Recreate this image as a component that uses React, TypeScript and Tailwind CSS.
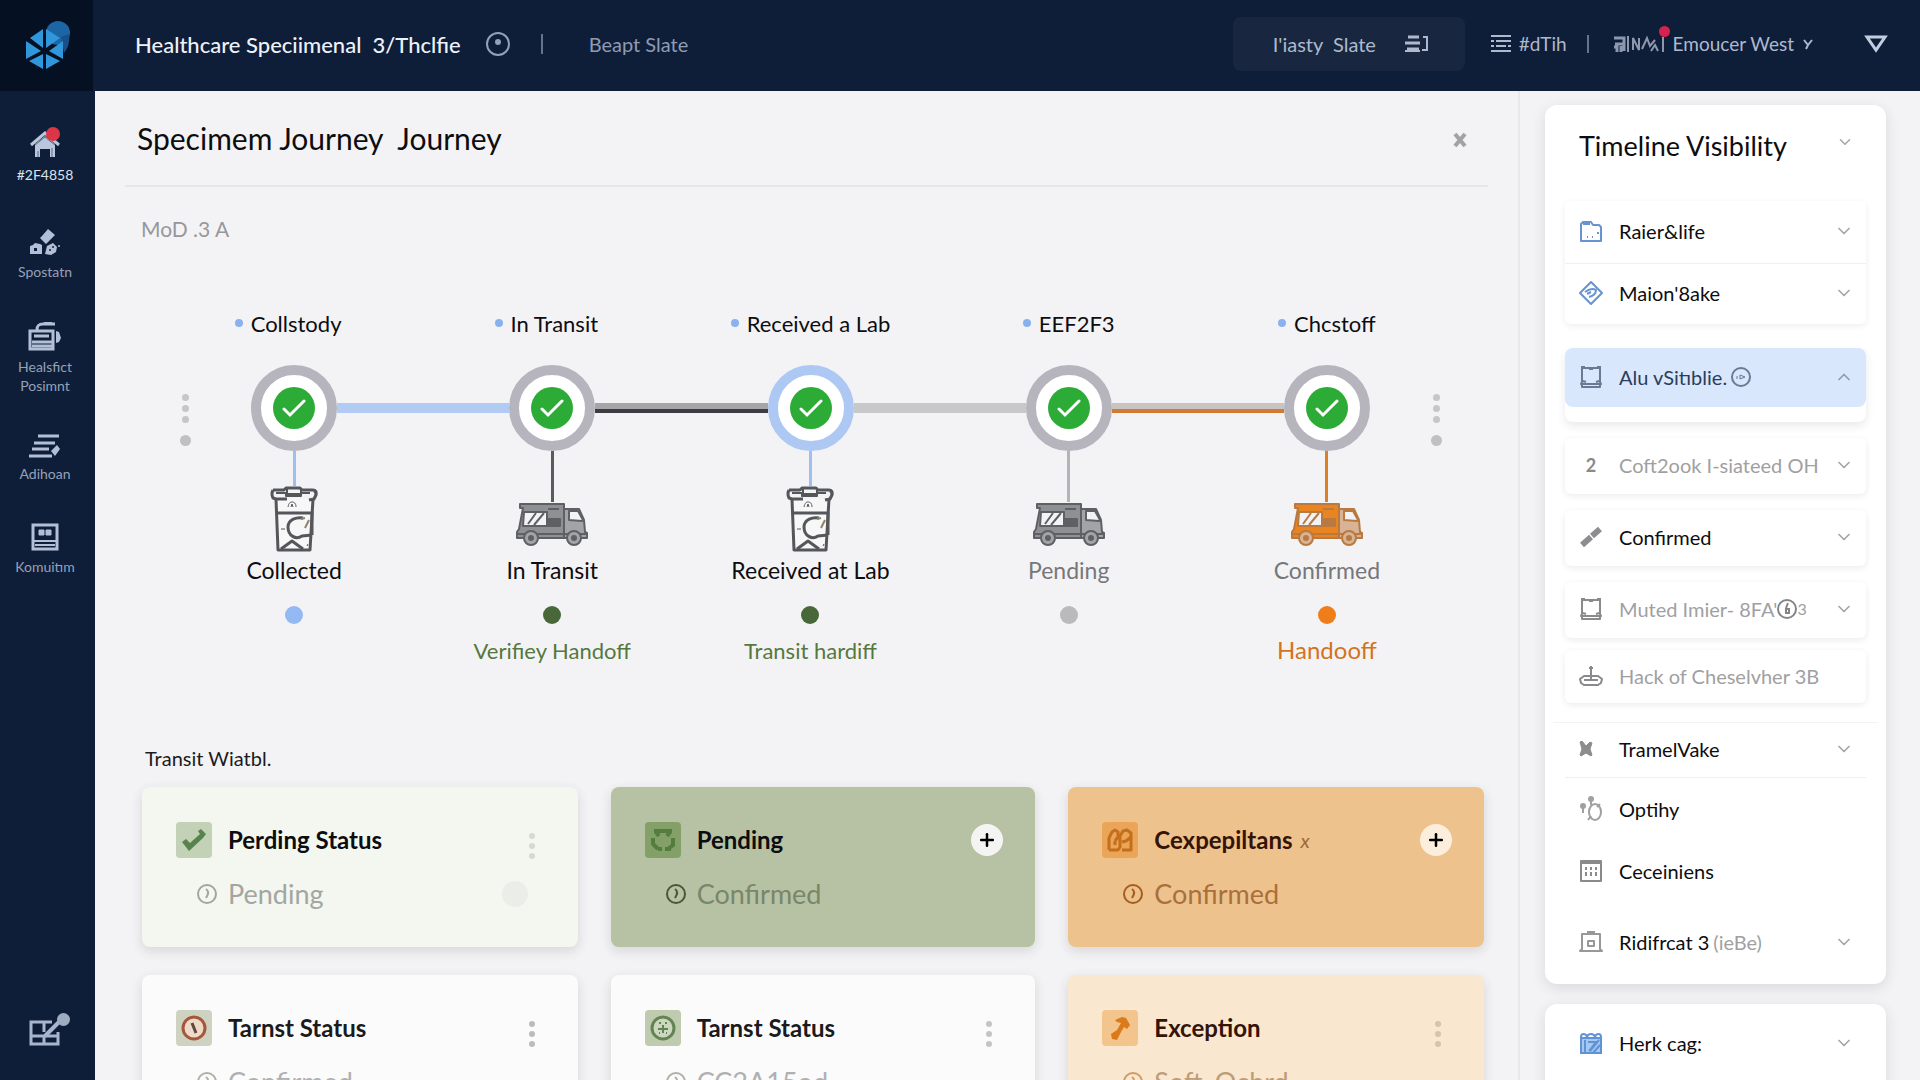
import { ReactNode } from 'react';
import { ChevronDown, ChevronUp, Plus } from 'lucide-react';

interface Step {
  title: string;
  titleClass?: string;
  label: string;
  labelClass: string;
  ring: string;
  left: ReactNode;
  right: ReactNode;
  stem: string;
  icon: ReactNode;
  iconClass: string;
  dot: string;
  note?: string;
  noteClass?: string;
}

interface StatusCard {
  title: string;
  titleClass: string;
  suffix?: string;
  sub: string;
  subClass: string;
  clockClass: string;
  bg: string;
  tile: string;
  icon: ReactNode;
  action: 'menu' | 'plus';
  actionClass: string;
  ghost?: boolean;
}

/* Sidebar icons */

function HouseIcon() {
  return (
    <svg width="30" height="28" viewBox="0 0 30 28" fill="none">
      <path d="M5 13v13h5v-8h10v8h5V13l-10-8z" fill="#b9c6dc" />
      <path d="M1 14 15 2l14 12" stroke="#b9c6dc" strokeWidth="3" />
      <path d="M5 14 15 6l10 8" stroke="#5c6b86" strokeWidth="1" />
      <path d="M22 5v5" stroke="#b9c6dc" strokeWidth="3" />
      <path d="M8 20v6M22 17v9" stroke="#5c6b86" strokeWidth="1" />
      <path d="M12 18h6v9h-6z" fill="#0f1e38" />
    </svg>
  );
}

function SpecimenIcon() {
  return (
    <svg width="32" height="28" viewBox="0 0 32 28" fill="#b3bfd6">
      <path d="m19 1 7 6-9 9-6-6 2-2z" />
      <path d="M1 18l3-1 2-2 5 1 2 1v9H1z" />
      <path d="M16 26l2-8 6-3 4 4-1 5-5 3z" />
      <path d="M5 20h3v3H5z" fill="#0f1e38" />
      <circle cx="21" cy="22" r="1" fill="#0f1e38" />
      <circle cx="24" cy="19" r="1" fill="#0f1e38" />
      <circle cx="30" cy="18" r="1" />
    </svg>
  );
}

function PrinterIcon() {
  return (
    <svg width="34" height="30" viewBox="0 0 34 30" fill="none" stroke="#b3bfd6">
      <path d="M9 9c0-5 2-6 6-6h12" strokeWidth="3" />
      <path d="M16 2h8" strokeWidth="2" />
      <path d="M2 10h23v18H2z" strokeWidth="3" />
      <path d="M6 15h15M4 21h20M4 25h20" strokeWidth="3" />
      <path d="M28 10l3 1 2 6-2 4-3 1z" fill="#b3bfd6" stroke="none" />
    </svg>
  );
}

function ListPenIcon() {
  return (
    <svg width="34" height="24" viewBox="0 0 34 24" fill="none" stroke="#b3bfd6" strokeWidth="3">
      <path d="M10 2h21M6 9h21M4 15h17M1 22h23" />
      <path d="m23 17 6-6 3 4-5 7z" fill="#b3bfd6" stroke="none" />
    </svg>
  );
}

function PanelIcon() {
  return (
    <svg width="28" height="28" viewBox="0 0 28 28" fill="none" stroke="#b3bfd6">
      <rect x="2" y="2" width="24" height="24" strokeWidth="3" />
      <path d="M3 18h22M4 22h20" strokeWidth="2" />
      <path d="M8 7h5v5H8zM15 7h5v5h-5z" fill="#b3bfd6" strokeWidth="1" />
    </svg>
  );
}

/* Timeline icons */

function CupIcon() {
  return (
    <svg width="48" height="66" viewBox="0 0 48 66" fill="none" stroke="#55565a" strokeWidth="3" strokeLinejoin="round">
      <path d="M6 13 8 64h32l3-51" fill="#f7f7f8" />
      <path d="M3 4h11l2-2h14l2 2h11q4 0 3 5l-2 4-5 1M3 4Q1 8 3 12l3 1h11" />
      <path d="M17 3v5h14V3M6 7h10v3h15V7h9" strokeWidth="2" />
      <path d="M44 5c2 2 2 5 0 7" strokeWidth="2" />
      <path d="M18 21c1-4 2-5 4-5s4 1 4 5M21 21l1-3 1 3" strokeWidth="1" />
      <path d="M7 27h35v22" />
      <path d="M33 32c-6-1-15 1-15 9 0 9 8 13 14 9l10-1" />
      <path d="m35 42 4-8M31 33l4-1" stroke="#8d8466" strokeWidth="2" />
      <path d="M11 43h4M37 60l1-2" strokeWidth="1" />
      <path d="m11 63 11-8 11 8" />
    </svg>
  );
}

function TruckIcon({ body, cab, line }: { body: string; cab: string; line: string }) {
  return (
    <svg width="72" height="44" viewBox="0 0 72 44" fill="none" stroke={line} strokeWidth="2" strokeLinejoin="round">
      <path d="M4 2h44v34H1v-6l2-3L7 6H4z" fill={body} />
      <path d="M48 7h15l5 11 1 12 2 1v5H48z" fill={cab} />
      <path d="M53 9h9l5 9-1 1-13-1z" fill="#f3f3f5" />
      <path d="M8 10h23v14H7z" fill="#f3f3f5" />
      <path d="m12 22 8-11M18 23l10-12" />
      <path d="M32 7h11M32 17h12v7H32zM32 20h12" fill={line} />
      <path d="M2 32h69M2 36h68" strokeWidth="2" />
      <circle cx="15" cy="36" r="7" fill={cab} />
      <circle cx="15" cy="36" r="2" fill={line} />
      <circle cx="58" cy="36" r="7" fill={cab} />
      <circle cx="58" cy="36" r="2" fill={line} />
    </svg>
  );
}

function ClockIcon({ className }: { className: string }) {
  return (
    <svg width="22" height="22" viewBox="0 0 22 22" fill="none" stroke="currentColor" className={className}>
      <circle cx="11" cy="11" r="9" strokeWidth="2" />
      <path d="M10 6c3 2 2 6 0 9" strokeWidth="2" />
    </svg>
  );
}

function SideDots() {
  return (
    <div className="flex w-10 flex-col items-center pt-6">
      <div className="flex flex-col gap-1">
        <span className="size-[7px] rounded-full bg-[#c6c6c8]" />
        <span className="size-[7px] rounded-full bg-[#c6c6c8]" />
        <span className="size-[7px] rounded-full bg-[#c6c6c8]" />
      </div>
      <span className="mt-3 size-[11px] rounded-full bg-[#c0c0c2]" />
    </div>
  );
}

const blueLine = <div className="h-[10px] flex-1 bg-[#b1cbf5]" />;
const grayLine = <div className="h-[10px] flex-1 bg-[#c8c8ca]" />;
const darkLine = <div className="h-[10px] flex-1 border-b-4 border-[#3c3d42] bg-[#a6a6a8]" />;
const orangeLine = <div className="h-[10px] flex-1 border-b-4 border-[#d27a34] bg-[#c8c4c2]" />;

const steps: Step[] = [
  {
    title: 'Collstody',
    titleClass: 'mr-3',
    label: 'Collected',
    labelClass: 'text-[#0d0d0f]',
    ring: 'border-[#b6b5bd]',
    left: (
      <div className="flex-1">
        <SideDots />
      </div>
    ),
    right: blueLine,
    stem: 'bg-[#9fbff2]',
    icon: <CupIcon />,
    iconClass: 'h-[101px]',
    dot: 'bg-[#93b9f5]',
  },
  {
    title: 'In Transit',
    titleClass: 'mr-3',
    label: 'In Transit',
    labelClass: 'text-[#0d0d0f]',
    ring: 'border-[#b6b5bd]',
    left: blueLine,
    right: darkLine,
    stem: 'bg-[#5a5b60]',
    icon: <TruckIcon body="#8f9094" cab="#a3a4a8" line="#5f6065" />,
    iconClass: 'h-[101px] pb-[6px]',
    dot: 'bg-[#48683a]',
    note: 'Verifiey Handoff',
    noteClass: 'text-[22px] text-[#56783f]',
  },
  {
    title: 'Received a Lab',
    label: 'Received at Lab',
    labelClass: 'text-[#0d0d0f]',
    ring: 'border-[#adc8f3]',
    left: darkLine,
    right: grayLine,
    stem: 'bg-[#9fbff2]',
    icon: <CupIcon />,
    iconClass: 'h-[101px]',
    dot: 'bg-[#48683a]',
    note: 'Transit hardiff',
    noteClass: 'text-[22px] text-[#56783f]',
  },
  {
    title: 'EEF2F3',
    label: 'Pending',
    labelClass: 'text-[#77777a]',
    ring: 'border-[#b6b5bd]',
    left: grayLine,
    right: orangeLine,
    stem: 'bg-[#b4b4b8]',
    icon: <TruckIcon body="#8f9094" cab="#a3a4a8" line="#5f6065" />,
    iconClass: 'h-[101px] pb-[6px]',
    dot: 'bg-[#bababd]',
  },
  {
    title: 'Chcstoff',
    label: 'Confirmed',
    labelClass: 'text-[#77777a]',
    ring: 'border-[#b6b5bd]',
    left: orangeLine,
    right: (
      <div className="flex flex-1 justify-end">
        <SideDots />
      </div>
    ),
    stem: 'bg-[#dd7f22]',
    icon: <TruckIcon body="#ea8420" cab="#d8b396" line="#b9793f" />,
    iconClass: 'h-[101px] pb-[6px]',
    dot: 'bg-[#ef7d1a]',
    note: 'Handooff',
    noteClass: 'text-2xl text-[#d4731f]',
  },
];

const cards: StatusCard[] = [
  {
    title: 'Perding Status',
    titleClass: 'text-[#0d0d0f]',
    sub: 'Pending',
    subClass: 'text-[#a3a6a0]',
    clockClass: 'text-[#a3a6a0]',
    bg: 'bg-[#f4f6f0]',
    tile: 'bg-[#c3d1b6]',
    icon: (
      <svg width="26" height="24" viewBox="0 0 26 24" fill="#57834d">
        <path d="m1 14 4-3 4 4 10-9-2-3 3-2 5 5-3 4-14 13z" />
      </svg>
    ),
    action: 'menu',
    actionClass: 'bg-[#d6d8d4]',
    ghost: true,
  },
  {
    title: 'Pending',
    titleClass: 'text-[#0d0d0f]',
    sub: 'Confirmed',
    subClass: 'text-[#7a8669]',
    clockClass: 'text-[#4a5638]',
    bg: 'bg-[#b6c2a3]',
    tile: 'bg-[#84a069]',
    icon: (
      <svg width="26" height="24" viewBox="0 0 26 24" fill="none" stroke="#557c40" strokeWidth="4">
        <path d="M4 3h18M6 4l3 4M20 4l-3 4M3 10v6l5 5M23 10v7l-5 4M8 21h4M15 21h6" />
      </svg>
    ),
    action: 'plus',
    actionClass: 'bg-[#f4f5f2]',
  },
  {
    title: 'Cexpepiltans',
    titleClass: 'text-[#351307]',
    suffix: 'x',
    sub: 'Confirmed',
    subClass: 'text-[#a96f3c]',
    clockClass: 'text-[#a45d1f]',
    bg: 'bg-[#eec28c]',
    tile: 'bg-[#eba558]',
    icon: (
      <svg width="26" height="24" viewBox="0 0 26 24" fill="none" stroke="#c46f1b" strokeWidth="3" strokeLinejoin="round">
        <path d="M2 22V10l3-6 3-2 3 2v5l-3 4M2 22h9l2-3V8l3-5 4-1 4 3v4l-5 4-4 1M24 8v14h-9M8 13v4" />
      </svg>
    ),
    action: 'plus',
    actionClass: 'bg-[#fbeedd]',
  },
  {
    title: 'Tarnst Status',
    titleClass: 'text-[#1b1b1d]',
    sub: 'Confirmed',
    subClass: 'text-[#b0b0b0]',
    clockClass: 'text-[#b0b0a8]',
    bg: 'bg-[#fbfbfb]',
    tile: 'bg-[#ced2c0]',
    icon: (
      <svg width="26" height="26" viewBox="0 0 26 26" fill="#efd9c8" stroke="#a5573b" strokeWidth="3">
        <circle cx="13" cy="13" r="11" />
        <path d="m11 8 4 10" stroke="#5d4a3c" />
      </svg>
    ),
    action: 'menu',
    actionClass: 'bg-[#bcbcbe]',
  },
  {
    title: 'Tarnst Status',
    titleClass: 'text-[#1b1b1d]',
    sub: 'CC2A15od',
    subClass: 'text-[#b0b0b0]',
    clockClass: 'text-[#b0b0a8]',
    bg: 'bg-[#fbfbfb]',
    tile: 'bg-[#becbae]',
    icon: (
      <svg width="26" height="26" viewBox="0 0 26 26" fill="none" stroke="#648355" strokeWidth="3">
        <circle cx="13" cy="13" r="11" fill="#cbd8bf" />
        <path d="M13 10v8M8 14h10M9 8h2M15 8h2M9 18h1M16 18h1" strokeWidth="2" />
      </svg>
    ),
    action: 'menu',
    actionClass: 'bg-[#c4c4c6]',
  },
  {
    title: 'Exception',
    titleClass: 'text-[#351307]',
    sub: 'Soft_Ochrd',
    subClass: 'text-[#bd9c78]',
    clockClass: 'text-[#cf9c66]',
    bg: 'bg-[#f9e7cf]',
    tile: 'bg-[#f3c48b]',
    icon: (
      <svg width="26" height="26" viewBox="0 0 26 26" fill="#da7a1a">
        <path d="m8 5 7-3 4 1 4 7-3 4-3-2-3 5-4 8-5-1-1-5 6-4 4-7-4-1z" />
      </svg>
    ),
    action: 'menu',
    actionClass: 'bg-[#d8c3ab]',
  },
];

/* Panel icons, 24px box */

const trayPath = 'M3 3h18v14l1 2H2l1-2zM2 2h4M10 4h4M18 2h4M3 19v3h18v-3M4 16l3 1M17 17l3-1';

function PanelGlyph({ d, color }: { d: string; color: string }) {
  return (
    <svg
      width="24"
      height="24"
      viewBox="0 0 24 24"
      fill="none"
      stroke={color}
      strokeWidth="2"
      strokeLinejoin="round"
      className="shrink-0"
    >
      <path d={d} />
    </svg>
  );
}

function PanelRow({
  icon,
  children,
  className,
  chevron = 'down',
}: {
  icon: ReactNode;
  children: ReactNode;
  className: string;
  chevron?: 'down' | 'up' | 'none';
}) {
  return (
    <button
      type="button"
      className={`flex w-full items-center pr-3 pb-[2px] pl-[14px] text-left text-[20px] leading-6 ${className}`}
    >
      <span className="flex w-10 shrink-0 items-center">{icon}</span>
      <span className="flex flex-1 items-center gap-1 whitespace-nowrap">{children}</span>
      {chevron === 'down' && <ChevronDown size={20} className="shrink-0 text-[#a5a5a7]" />}
      {chevron === 'up' && <ChevronUp size={20} className="shrink-0 text-[#8e9bb0]" />}
    </button>
  );
}

function NavItem({ icon, label, className }: { icon: ReactNode; label: string; className: string }) {
  return (
    <a href="#" className={`flex flex-col items-center pb-[2px] text-center text-sm leading-[19px] ${className}`}>
      <span className="flex h-8 items-end">{icon}</span>
      <span className="mt-[6px] w-16">{label}</span>
    </a>
  );
}

function MenuDots({ dotClass }: { dotClass: string }) {
  return (
    <button type="button" aria-label="Card menu" className="ml-auto flex w-7 flex-col items-center gap-1 pt-3">
      <span className={`size-[6px] rounded-full ${dotClass}`} />
      <span className={`size-[6px] rounded-full ${dotClass}`} />
      <span className={`size-[6px] rounded-full ${dotClass}`} />
    </button>
  );
}

function Card({ card }: { card: StatusCard }) {
  return (
    <div className={`h-40 rounded-lg pt-[35px] pr-8 pl-[34px] shadow-[0_4px_12px_rgba(40,40,60,0.14)] ${card.bg}`}>
      <div className="flex h-9 items-center">
        <span className={`flex size-9 items-center justify-center rounded-[4px] ${card.tile}`}>{card.icon}</span>
        <h3 className={`ml-4 text-2xl leading-7 font-bold ${card.titleClass}`}>{card.title}</h3>
        {card.suffix && <span className="ml-2 text-xl text-[#a06a35] italic">{card.suffix}</span>}
        {card.action === 'menu' ? (
          <MenuDots dotClass={card.actionClass} />
        ) : (
          <button
            type="button"
            aria-label="Add"
            className={`ml-auto flex size-8 items-center justify-center rounded-full ${card.actionClass}`}
          >
            <Plus size={20} strokeWidth={3} className="text-black" />
          </button>
        )}
      </div>
      <div className="mt-[18px] flex h-9 items-center pl-5">
        <ClockIcon className={card.clockClass} />
        <span className={`ml-[10px] text-[27px] leading-8 ${card.subClass}`}>{card.sub}</span>
        {card.ghost && <span className="mr-[18px] ml-auto size-[26px] rounded-full bg-[#ebeee8]" />}
      </div>
    </div>
  );
}

function TimelineStep({ step }: { step: Step }) {
  return (
    <div className="flex flex-col items-center">
      <div className={`flex h-7 items-center gap-2 text-[22px] text-[#0d0d0f] ${step.titleClass ?? ''}`}>
        <span className="size-2 rounded-full bg-[#8ab1ee]" />
        {step.title}
      </div>
      <div className="mt-7 flex w-full items-center">
        {step.left}
        <div className={`flex size-[86px] items-center justify-center rounded-full border-[10px] bg-white ${step.ring}`}>
          <span className="flex size-[42px] items-center justify-center rounded-full bg-[#2cab36]">
            <svg width="24" height="20" viewBox="0 0 24 20" fill="none" stroke="#fff" strokeWidth="3" strokeLinecap="round">
              <path d="m2 11 6 6L22 3" />
            </svg>
          </span>
        </div>
        {step.right}
      </div>
      <div className={`flex flex-col items-center ${step.iconClass}`}>
        <span className={`w-[3px] flex-1 ${step.stem}`} />
        {step.icon}
      </div>
      <div className={`flex h-9 items-center text-[23px] ${step.labelClass}`}>{step.label}</div>
      <span className={`mt-[18px] size-[18px] rounded-full ${step.dot}`} />
      <div className={`mt-3 flex h-7 items-center ${step.noteClass ?? ''}`}>{step.note}</div>
    </div>
  );
}

export default function App() {
  return (
    <div className="flex h-screen flex-col overflow-hidden bg-[#f3f3f5] font-[Lato,'Noto_Sans',sans-serif]">
      {/* Top bar */}
      <header className="flex h-[91px] shrink-0 bg-[#0f1e38] text-[#aeb9ce]">
        <div className="flex w-[93px] items-center justify-center bg-[#051122]">
          <svg width="50" height="52" viewBox="0 0 50 52" fill="none">
            <circle cx="36" cy="13" r="12" fill="#1d66a6" />
            <path d="M47 14c1 8-1 14-5 19l-3-16z" fill="#17508a" />
            <path
              d="M21 9 8 18l13 10zM24 9l14 9-14 10zM4 21l15 10L4 39zM41 21v18L27 31zM21 34v15L7 41zM24 34v15l14-8z"
              fill="#3197dc"
            />
          </svg>
        </div>
        <div className="flex flex-1 items-center pb-[3px]">
          <h1 className="ml-[42px] text-[22px] font-medium whitespace-pre text-[#eef2f8]">Healthcare Speciimenal  3/Thclfie</h1>
          <svg width="26" height="26" viewBox="0 0 26 26" fill="none" stroke="#94a0b8" strokeWidth="2" className="ml-6">
            <circle cx="13" cy="13" r="11" />
            <circle cx="13" cy="11" r="2" fill="#94a0b8" />
          </svg>
          <span className="ml-[30px] h-5 w-[2px] bg-[#66738d]" />
          <a href="#" className="ml-[46px] text-xl text-[#8f9bb3]">
            Beapt Slate
          </a>

          <button
            type="button"
            className="ml-auto flex h-[54px] w-[232px] items-center justify-between rounded-lg bg-[#18273f] pr-9 pl-10 text-xl whitespace-pre"
          >
            I'iasty  Slate
            <svg width="24" height="18" viewBox="0 0 24 18" fill="none" stroke="#aeb9ce" strokeWidth="3">
              <path d="M3 2h11M0 8h15M2 14h12" />
              <path d="M0 16h15" strokeWidth="2" />
              <path d="M18 2h4v13h-5" strokeWidth="2" />
            </svg>
          </button>
          <svg width="20" height="18" viewBox="0 0 20 18" fill="none" stroke="#aeb9ce" strokeWidth="2" className="ml-[26px]">
            <path d="M0 1h20M0 16h20" />
            <path d="M0 6h3M5 6h15M0 11h3M5 11h10M17 11h3" />
          </svg>
          <span className="ml-2 text-[19px]">#dTih</span>
          <span className="ml-5 h-[18px] w-[2px] bg-[#66738d]" />
          <span className="relative ml-6">
            <svg width="52" height="20" viewBox="0 0 52 20" fill="none" stroke="#8c98b0" strokeWidth="2">
              <path d="M1 4h10v6H2M1 13h3v5M8 12v6M11 9v8" strokeWidth="3" />
              <path d="M15 2v16M20 16V4l6 12V4M29 15l5-11 3 8 5-6M38 17l4-6 3 6M50 3v15" />
            </svg>
            <span className="absolute -top-2 right-[-5px] size-[11px] rounded-full bg-[#d42350]" />
          </span>
          <button type="button" className="ml-2 flex items-center gap-2 text-[19px]">
            Emoucer West
            <svg width="12" height="12" viewBox="0 0 12 12" fill="none" stroke="#aeb9ce" strokeWidth="2">
              <path d="m2 2 4 5 4-5M6 7l-2 4" />
            </svg>
          </button>
          <button type="button" aria-label="Filter" className="mr-8 ml-[50px]">
            <svg width="24" height="18" viewBox="0 0 24 18" fill="none" stroke="#c3cde0" strokeWidth="3">
              <path d="M3 2h18l-9 13z" />
            </svg>
          </button>
        </div>
      </header>

      <div className="flex min-h-0 flex-1">
        {/* Sidebar */}
        <nav className="flex w-[95px] shrink-0 flex-col bg-[#0f1e38] pt-9 pr-[5px] text-[#95a1b8]">
          <NavItem
            className="text-[#dbe2ee]"
            label="#2F4858"
            icon={
              <span className="relative">
                <HouseIcon />
                <span className="absolute -top-1 right-0 size-[14px] rounded-full bg-[#dc3545]" />
              </span>
            }
          />
          <NavItem className="mt-[38px]" label="Spostatn" icon={<SpecimenIcon />} />
          <NavItem className="mt-9" label="Healsfict Posimnt" icon={<PrinterIcon />} />
          <NavItem className="mt-[29px]" label="Adihoan" icon={<ListPenIcon />} />
          <NavItem className="mt-[34px]" label="Komuitım" icon={<PanelIcon />} />
          <a href="#" aria-label="Workspace" className="relative mb-[33px] mt-auto self-center">
            <svg width="34" height="30" viewBox="0 0 34 30" fill="none" stroke="#a9b5cc" strokeWidth="3">
              <path d="M24 5H3v22h27V15M3 19h27M16 5v10M16 19v8" />
              <path d="M31 5 17 19" strokeWidth="4" />
            </svg>
            <span className="absolute -top-1 -right-2 size-[13px] rounded-full bg-[#9fabc0]" />
          </a>
        </nav>

        {/* Main */}
        <main className="min-w-0 flex-1 border-r-2 border-[#e8e8ea]">
          <div className="mx-[30px] flex h-24 items-center justify-between border-b-2 border-[#e6e6e8] pr-5 pl-3">
            <h2 className="text-3xl whitespace-pre text-[#0d0d0f]">Specimem Journey  Journey</h2>
            <button type="button" aria-label="Close" className="pt-1">
              <svg width="16" height="16" viewBox="0 0 16 16" stroke="#a2a2a4" strokeWidth="4">
                <path d="m3 2 10 12M13 2 3 14" />
              </svg>
            </button>
          </div>
          <div className="mt-7 ml-[46px] h-7 text-[21px] leading-7 text-[#97979a]">MoD .3 A</div>

          <div className="mt-[66px] mr-[62px] ml-[70px] grid grid-cols-5">
            {steps.map((step) => (
              <TimelineStep key={step.title} step={step} />
            ))}
          </div>

          <h3 className="mt-20 ml-[50px] h-7 text-xl leading-7 text-[#1b1b1d]">Transit Wiatbl.</h3>
          <div className="mt-[15px] mr-[34px] ml-[47px] grid grid-cols-[435fr_424fr_415fr] gap-x-[33px] gap-y-7">
            {cards.map((card, i) => (
              <Card key={i} card={card} />
            ))}
          </div>
        </main>

        {/* Timeline visibility */}
        <aside className="w-[400px] shrink-0 pt-[14px] pr-[34px] pl-[25px]">
          <section className="rounded-xl bg-white px-5 text-[#0d0d0f] shadow-[0_4px_14px_rgba(40,40,60,0.12)]">
            <div className="flex h-[82px] items-center justify-between pr-3 pl-[14px]">
              <h2 className="text-[27px]">Timeline Visibility</h2>
              <ChevronDown size={18} className="mb-2 text-[#a5a5a7]" />
            </div>

            <div className="mt-[14px] rounded-md shadow-[0_2px_6px_rgba(40,40,60,0.08)]">
              <PanelRow
                className="h-[62px]"
                icon={<PanelGlyph color="#6893d0" d="M4 3h8l2 3h6l2 2v14H2V5zM8 18h1M13 18h1M4 5h7M18 14h2" />}
              >
                Raier&life
              </PanelRow>
              <PanelRow
                className="h-[61px] border-t border-[#f0f0f1]"
                icon={<PanelGlyph color="#6893d0" d="M12 1 23 12 12 23 1 12zM6 11c4-3 8-4 11-2 0 4-3 6-7 7M12 11l-4 2" />}
              >
                Maion'8ake
              </PanelRow>
            </div>

            <div className="mt-6 rounded-lg pb-[15px] shadow-[0_4px_8px_rgba(40,40,60,0.1)]">
              <PanelRow
                className="h-[59px] rounded-lg bg-[#d8e7fc] text-[#2c3d5c]"
                chevron="up"
                icon={<PanelGlyph color="#6b7a93" d={trayPath} />}
              >
                Alu vSitıblie.
                <svg width="20" height="20" viewBox="0 0 20 20" fill="none" stroke="#6b7a93" strokeWidth="2">
                  <circle cx="10" cy="10" r="9" />
                  <path d="M6 9v3M9 8v4l5-2z" strokeWidth="1" />
                </svg>
              </PanelRow>
            </div>

            <div className="mt-4 flex flex-col gap-4">
              <PanelRow
                className="h-14 rounded-md text-[#a0a0a2] shadow-[0_2px_6px_rgba(40,40,60,0.09)]"
                icon={<span className="w-6 text-center text-lg font-bold text-[#8a8a8c]">2</span>}
              >
                Coft2ook I-siateed OH
              </PanelRow>
              <PanelRow
                className="h-14 rounded-md shadow-[0_2px_6px_rgba(40,40,60,0.09)]"
                icon={
                  <svg width="24" height="24" viewBox="0 0 24 24" fill="none" stroke="#8d8d8f" strokeWidth="6">
                    <path d="m3 20 9-8M13 11l8-7" />
                  </svg>
                }
              >
                Confirmed
              </PanelRow>
              <PanelRow
                className="h-14 rounded-md text-[#a0a0a2] shadow-[0_2px_6px_rgba(40,40,60,0.09)]"
                icon={<PanelGlyph color="#8a8a8c" d={trayPath} />}
              >
                Muted Imier- 8FA'
                <svg width="20" height="20" viewBox="0 0 20 20" fill="none" stroke="#858587" strokeWidth="2" className="-ml-1">
                  <circle cx="10" cy="10" r="9" />
                  <path d="m11 4-2 5M9 10h3v4H9z" />
                </svg>
                <span className="-ml-1 text-base">3</span>
              </PanelRow>
            </div>
            <PanelRow
              className="mt-3 h-[53px] rounded-md text-[#a0a0a2] shadow-[0_2px_6px_rgba(40,40,60,0.09)]"
              chevron="none"
              icon={<PanelGlyph color="#8a8a8c" d="M12 2v14M10 4h4M5 12h14l4 3-1 4-3 2H5l-3-2-1-4zM5 16h14" />}
            >
              Hack of Cheselvher 3B
            </PanelRow>

            <div className="-mx-3 mt-[19px] border-t border-[#f3f3f4] px-3">
              <PanelRow
                className="h-[55px] border-b border-[#efeff0]"
                icon={
                  <svg width="14" height="16" viewBox="0 0 14 16" stroke="#8d8d8f" fill="#8d8d8f">
                    <path d="m1 1 2-1 4 5 4-4 2 1-2 6 2 6-1 1-5-3-5 3-1-1 2-6z" />
                  </svg>
                }
              >
                TramelVake
              </PanelRow>
            </div>
            <PanelRow
              className="h-16"
              chevron="none"
              icon={
                <svg width="24" height="26" viewBox="0 0 24 26" fill="none" stroke="#a0a0a2" strokeWidth="2">
                  <ellipse cx="16" cy="16" rx="6" ry="8" />
                  <path d="M12 9V3M4 17V9M9 24l3-4M18 11l3-3" />
                  <circle cx="12" cy="3" r="2" fill="#a0a0a2" />
                  <circle cx="4" cy="10" r="2" fill="#a0a0a2" />
                </svg>
              }
            >
              Optihy
            </PanelRow>
            <PanelRow
              className="h-[60px]"
              chevron="none"
              icon={
                <PanelGlyph
                  color="#8a8a8c"
                  d="M2 2h20v20H2zM3 4h18M7 8v3M12 8v3M17 8v3M7 13v4M12 13v4M17 13v4"
                />
              }
            >
              Ceceiniens
            </PanelRow>
            <PanelRow
              className="h-[82px]"
              icon={<PanelGlyph color="#98989a" d="M3 4h18v15l2 2H1l2-2zM8 2h8M9 11h6v5H9z" />}
            >
              Ridifrcat 3 <span className="text-[#a0a0a2]">(ieBe)</span>
            </PanelRow>
          </section>

          <section className="mt-5 rounded-t-xl bg-white px-5 pb-10 text-[#0d0d0f] shadow-[0_4px_14px_rgba(40,40,60,0.12)]">
            <PanelRow
              className="h-20"
              icon={
                <svg width="24" height="24" viewBox="0 0 24 24" fill="none" stroke="#5f93d8" strokeWidth="2">
                  <path d="M2 7h20v15H2z" fill="#a9c8f0" />
                  <path d="M2 6c0-4 5-4 6 0 1-4 7-4 8 0 1-4 6-4 6 0M6 9v12M9 11h8l-7 9M20 9l-9 11M21 14l-7 8" />
                </svg>
              }
            >
              Herk cag:
            </PanelRow>
          </section>
        </aside>
      </div>
    </div>
  );
}
